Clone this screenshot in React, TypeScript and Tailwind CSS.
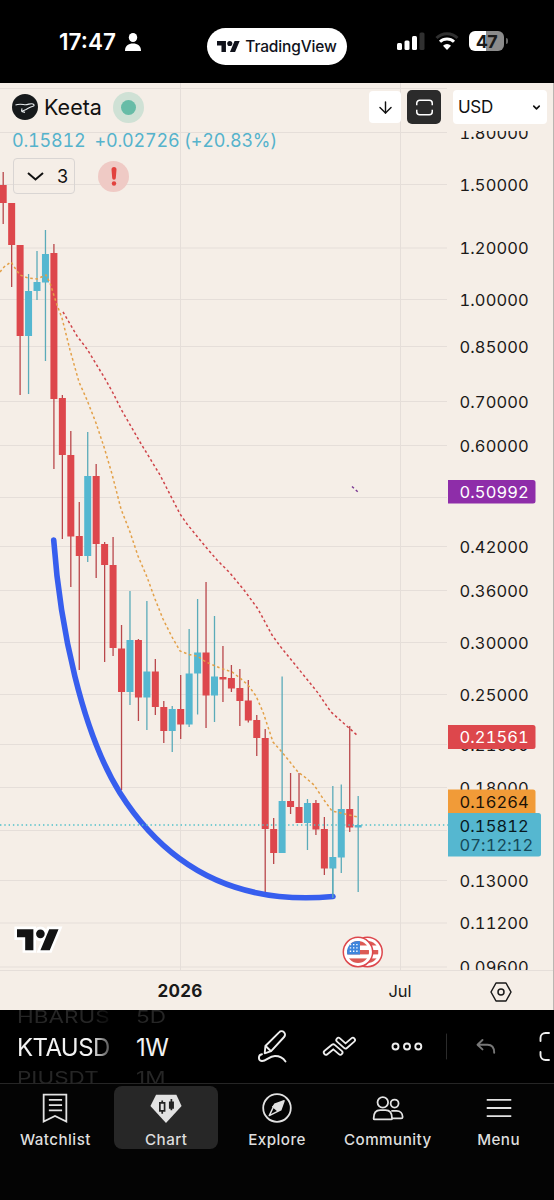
import type { ReactNode } from 'react';
import { ArrowDown, ChevronDown } from 'lucide-react';

type Candle = [top: number, bottom: number, high: number, low: number, up?: 1];

const RED = '#dd474c';
const BLUE = '#55b7d0';

// Weekly bars, y positions on the chart: body top, body bottom, wick top, wick bottom
const CANDLES: Candle[] = [
  [185, 203, 172, 224],
  [203, 245, 203, 287],
  [245, 336, 245, 395],
  [291, 336, 274, 394, 1],
  [282, 291, 251, 300, 1],
  [254, 282.5, 230, 361, 1],
  [253, 399, 244, 469],
  [398, 455, 395, 539],
  [455, 536.5, 431, 587],
  [536, 556, 502, 670],
  [476, 556, 432, 562, 1],
  [476, 544, 464, 578],
  [544, 565, 542, 662],
  [565, 648, 537, 656],
  [648.5, 692, 625, 790],
  [640, 692, 591, 705, 1],
  [640, 697.5, 639, 721],
  [671.5, 697.5, 601, 730, 1],
  [671.5, 707, 659, 715],
  [707, 731, 701, 743],
  [709, 731, 706, 752, 1],
  [709, 724.5, 675, 739],
  [673.5, 724.5, 629, 727, 1],
  [652.5, 673.5, 599, 714.5, 1],
  [652.5, 695.5, 582, 728],
  [676.5, 695.5, 616, 722, 1],
  [677, 679.5, 646, 702],
  [678, 688.5, 665, 692],
  [688, 701, 669, 726],
  [700.5, 720.5, 680, 722.5],
  [720, 738, 715, 756],
  [738, 829, 729, 892],
  [829, 853, 818, 864],
  [801, 853, 676.5, 853, 1],
  [801, 807, 773, 814],
  [807, 823, 773, 823],
  [803, 823, 799, 850, 1],
  [803, 829.5, 800, 835],
  [829, 868.5, 817, 875],
  [857, 868.5, 786, 898, 1],
  [809, 857.5, 784.5, 873, 1],
  [809, 827.5, 726, 832],
  [825, 827.5, 796, 892, 1],
];

const TICKS: [number, string][] = [
  [88.5, ''],
  [132.5, '1.80000'],
  [184.5, '1.50000'],
  [248, '1.20000'],
  [299.5, '1.00000'],
  [346.5, '0.85000'],
  [401.5, '0.70000'],
  [445.5, '0.60000'],
  [497.5, ''],
  [546.5, '0.42000'],
  [590.5, '0.36000'],
  [642.5, '0.30000'],
  [694.5, '0.25000'],
  [744.5, '0.21000'],
  [787.5, '0.18000'],
  [830.5, ''],
  [880.5, '0.13000'],
  [923, '0.11200'],
  [967, '0.09600'],
];

const FAST_MA =
  '0,272 4,267 11,262 15,268 20,275 28,278 37,279 46,275 50,283 57,305 62,318 70,350 79,382 87,400 96,423 104,447 112,474 121,509 130,532 138,556 147,577 155,599 163,619 172,637 180,651 189,654.5 197,656 206,662 220,668 232,672 240,678 248,685 256,696 263,712 273,742 281,751 290,762 298,772 306,778 314,785 324,800 332,811 341,813 349,815 358,817';
const SLOW_MA =
  '63,312 77,336 87,349 104,377 113,393 121,409 140,442 160,475 180,514 187,524 205,546 217,560 230,573 244,590 258,609 272,635 280,646 297,667 306,678 318,693 331,712 349,728 358,736';

function Flag({ cx }: { cx: number }) {
  return (
    <g transform={`translate(${cx} 952)`}>
      <circle r="14.700" fill="#fff" stroke={RED} strokeWidth="1.500" />
      <g clipPath="url(#flag)">
        <rect x="-11" y="-11" width="22" height="22" fill="#fff" />
        <rect x="-11" y="-11" width="22" height="4.500" fill="#dc5a55" />
        <rect x="-11" y="-2" width="22" height="4.400" fill="#dc5a55" />
        <rect x="-11" y="6.400" width="22" height="4.600" fill="#dc5a55" />
        <rect x="-11" y="-11" width="13" height="13.500" fill="#3f86dc" />
        <path d="M-8.200-7.400H1.500M-8.200-4.100H1.500M-8.200-.8H1.500" stroke="#fff" strokeWidth="1.400" strokeDasharray="1.400 1.800" />
      </g>
    </g>
  );
}

function PriceChart() {
  return (
    <svg viewBox="0 83 554 888" className="block h-[888px] w-[554px] font-['Inter',sans-serif] tabular-nums">
      <defs>
        <clipPath id="ticks">
          <rect x="448" y="131" width="106" height="839" />
        </clipPath>
        <clipPath id="flag">
          <circle r="11" />
        </clipPath>
      </defs>

      {/* Grid */}
      <g stroke="#e5ded9" strokeWidth="1">
        {TICKS.map(([y]) => (
          <path key={y} d={`M0 ${y}H447`} />
        ))}
        <path d="M180.5 83V970M400.5 83V970M0 970.5H554" />
      </g>

      {/* Candles */}
      {CANDLES.map(([top, bottom, high, low, up], i) => {
        const x = 3.2 + i * 8.452;
        return (
          <g key={i}>
            <path d={`M${x} ${high}V${low}`} stroke={up ? '#5aabb9' : '#b9474b'} strokeWidth="1.3" />
            <rect x={x - 3.5} y={top} width="7" height={bottom - top} fill={up ? BLUE : RED} />
          </g>
        );
      })}

      <path d="M53.700 540C60 628 82 732 120 793C163 861 230 906 333 896.500" fill="none" stroke="#375eee" strokeWidth="5.600" strokeLinecap="round" />
      <path d="M332.800 868V898" stroke="#5aabb9" strokeWidth="1.300" />

      {/* Moving averages */}
      <g fill="none" strokeWidth="1.500" strokeDasharray="2.600 2.600">
        <polyline points={FAST_MA} stroke="#e3a048" />
        <polyline points={SLOW_MA} stroke="#cf4349" />
        <path d="M352 486.500L359 493" stroke="#7b3a93" />
      </g>
      <path d="M0 825H448" stroke="#4fc0ca" strokeWidth="1.400" strokeDasharray="1.400 2.900" />

      <Flag cx={367.5} />
      <Flag cx={358} />

      {/* Watermark */}
      <g transform="translate(17 924.500) scale(1.170)" stroke="#fff" strokeWidth="4.500" fill="#fff">
        <path d="M14 22H7V11H0V4h14v18zM28 22h-8l7.500-18h8L28 22z" />
        <circle cx="20" cy="8" r="4" />
      </g>
      <g transform="translate(17 924.500) scale(1.170)" fill="#131313">
        <path d="M14 22H7V11H0V4h14v18zM28 22h-8l7.500-18h8L28 22z" />
        <circle cx="20" cy="8" r="3.700" />
      </g>

      {/* Price scale */}
      <g clipPath="url(#ticks)" fill="#1c1a19" fontSize="16.500" letterSpacing="0.1">
        {TICKS.map(([y, label]) => (
          <text key={y} x="459.500" y={y + 6}>
            {label}
          </text>
        ))}
      </g>
      <g fontSize="16.500" letterSpacing="0.1">
        <path d="M448 480h85a2.500 2.500 0 0 1 2.500 2.500v18.500a2.500 2.500 0 0 1-2.500 2.500h-85z" fill="#8e2da9" />
        <text x="459.500" y="498" fill="#fff">0.50992</text>
        <path d="M448 725h85a2.500 2.500 0 0 1 2.500 2.500v19a2.500 2.500 0 0 1-2.500 2.500h-85z" fill={RED} />
        <text x="459.500" y="743" fill="#fff">0.21561</text>
        <path d="M448 789.500h85a2.500 2.500 0 0 1 2.500 2.500v21h-87.500z" fill="#f19b38" />
        <text x="459.500" y="807.500" fill="#1c1207">0.16264</text>
        <path d="M448 813h90.500a2.500 2.500 0 0 1 2.500 2.500v38.500a2.500 2.500 0 0 1-2.500 2.500h-90.500z" fill={BLUE} />
        <text x="459.500" y="831.500" fill="#08191f">0.15812</text>
        <text x="459.500" y="851" fill="#16495a">07:12:12</text>
      </g>
      <path d="M553.500 83V971" stroke="#b9b5b1" />
    </svg>
  );
}

function StatusBar() {
  return (
    <header className="flex h-[83px] items-start bg-black text-white">
      <div className="mt-[27px] ml-[59px] flex w-[148px] items-center gap-[6px]">
        <span className="w-[60px] text-[22.5px] leading-[30px] font-semibold">17:47</span>
        <svg viewBox="0 0 16 18" className="h-[18px] w-4" fill="#fff">
          <ellipse cx="8" cy="4.500" rx="4.200" ry="4.500" />
          <path d="M0 18c0-5.500 3.500-7.500 8-7.500s8 2 8 7.500z" />
        </svg>
      </div>
      <div className="mt-7 flex h-[37px] w-[140px] items-center justify-center gap-[5px] rounded-full bg-white text-[#10121b]">
        <svg viewBox="0 4 36 18" className="h-[11.5px] w-[23px]" fill="currentColor">
          <path d="M14 22H7V11H0V4h14v18zM28 22h-8l7.500-18h8L28 22z" />
          <circle cx="20" cy="8" r="4" />
        </svg>
        <span className="text-[15.5px] font-medium tracking-[-0.15px]">TradingView</span>
      </div>
      <div className="mt-[31px] ml-[50px] flex h-5 items-center">
        <svg viewBox="0 0 28 20" className="h-5 w-7" fill="#fff">
          <rect x="0" y="12" width="5" height="7" rx="1.500" />
          <rect x="7.500" y="9.500" width="5" height="9.500" rx="1.500" />
          <rect x="15" y="5" width="5" height="14" rx="1.500" />
          <rect x="22.500" y="1.500" width="5" height="17.500" rx="1.500" fill="#303030" />
        </svg>
        <svg viewBox="0 0 24 18" className="ml-[10px] h-[18px] w-6" fill="none" strokeWidth="3">
          <path d="M1.500 6a15 15 0 0 1 21 0" stroke="#303030" />
          <path d="M5 9.800a10 10 0 0 1 14 0" stroke="#fff" />
          <path d="M12 18l-4-4.300a5.800 5.800 0 0 1 8 0z" fill="#fff" />
        </svg>
        <div className="ml-[10px] flex h-5 w-[35px] items-center justify-center rounded-[6px] bg-linear-to-r from-white from-48% to-[#8b8b8b] to-48% text-[18px] font-bold tracking-tight text-[#1a1a1a]">
          47
        </div>
        <div className="ml-[1.5px] h-[6px] w-[2px] rounded-r-full bg-[#666]" />
      </div>
    </header>
  );
}

function ChartHeader() {
  return (
    <div className="absolute inset-x-0 top-0 px-3 pt-[6px] text-[#111]">
      <div className="flex h-9 items-center">
        <svg viewBox="0 0 26 26" className="size-[26px]">
          <circle cx="13" cy="13" r="13" fill="#16191b" />
          <path d="M3.500 11c4-1.500 7-.5 10-.3 3 0 5-1.700 7.500-.8 1.500.8 1.500 2 0 2.300-3 .6-4.500 2-7 3.200l-4.500 2m0 0 .5-3m-.5 3 3.500 1" fill="none" stroke="#e8ecee" strokeWidth="1.100" />
        </svg>
        <span className="ml-[6px] w-[58px] text-[21.5px]">Keeta</span>
        <span className="ml-[11px] flex size-[31px] items-center justify-center rounded-full bg-[#cfe1d5]">
          <span className="size-[15px] rounded-full bg-[#67bca7]" />
        </span>
        <div className="ml-auto flex items-center">
          <span className="flex size-8 items-center justify-center rounded-[4px] bg-white">
            <ArrowDown size={19} strokeWidth={1.8} />
          </span>
          <span className="ml-[6px] flex size-[34px] items-center justify-center rounded-[5px] bg-[#2b2b2b]">
            <svg viewBox="0 0 16 16" className="size-[17px]" fill="none" stroke="#fff" strokeWidth="1.400">
              <path d="M.7 5.800V4a2.800 2.800 0 0 1 2.800-2.800h9A2.800 2.800 0 0 1 15.300 4v1.800M.7 10.200V12a2.800 2.800 0 0 0 2.800 2.800h9a2.800 2.800 0 0 0 2.800-2.800v-1.800" />
            </svg>
          </span>
          <span className="ml-3 -mr-[5px] flex h-[34px] w-[94px] items-center justify-between rounded-[4px] bg-white pt-px pr-[5px] pl-[5px] text-[17px] tracking-[-0.3px]">
            USD
            <ChevronDown size={11} strokeWidth={3.5} />
          </span>
        </div>
      </div>
      <div className="flex h-[30px] items-center gap-[9px] text-[18px] tracking-[-0.2px] whitespace-nowrap text-[#55b3cc] tabular-nums">
        <span>0.15812</span>
        <span>+0.02726 (+20.83%)</span>
      </div>
      <div className="mt-[3px] ml-px flex items-center">
        <span className="flex h-[36px] w-[62px] items-center rounded-[4px] border border-[#d9d5d3] pl-[13px] text-[18px]">
          <svg viewBox="0 0 17 9" className="h-[9px] w-[17px]" fill="none" stroke="currentColor" strokeWidth="2">
            <path d="M1 1l7.500 6.500L16 1" />
          </svg>
          <span className="ml-[13px]">3</span>
        </span>
        <span className="ml-[23px] flex size-[31px] items-center justify-center rounded-full bg-[#efcac5]">
          <svg viewBox="0 0 6 19" className="h-[19px] w-[6px]" fill="#e2423e">
            <path d="M.5 2.500a2.500 2.500 0 0 1 5 0l-.7 8.500a1.800 1.800 0 0 1-3.600 0z" />
            <circle cx="3" cy="16.500" r="2.200" />
          </svg>
        </span>
      </div>
    </div>
  );
}

function TimeAxis() {
  return (
    <div className="flex h-[39px] items-center border-r border-[#b9b5b1] pt-[2px] text-[17px] text-[#191919]">
      <span className="ml-[140px] w-20 text-center font-bold tracking-[0.3px]">2026</span>
      <span className="ml-[140px] w-20 text-center text-[16.5px]">Jul</span>
      <svg viewBox="0 0 22 20" className="ml-[50px] h-5 w-[22px]" fill="none" stroke="currentColor" strokeWidth="1.500">
        <path d="M6 1h10l5 9-5 9H6l-5-9z" strokeLinejoin="round" />
        <circle cx="11" cy="10" r="3" />
      </svg>
    </div>
  );
}

function Wheel({ items, className }: { items: [string, string, string]; className: string }) {
  return (
    <div className={`flex flex-col overflow-hidden whitespace-nowrap ${className}`}>
      <span className="flex h-[22px] scale-y-[0.75] items-center pb-[10px] text-[22.5px] text-[#262626]">{items[0]}</span>
      <span className="flex h-[30px] items-center pt-px text-[24px] tracking-[-0.6px] text-[#f2f2f2]">{items[1]}</span>
      <span className="flex h-[21px] scale-y-[0.75] items-center pt-[14px] text-[22.5px] text-[#262626]">{items[2]}</span>
    </div>
  );
}

function Toolbar() {
  return (
    <div className="flex h-[74px] overflow-hidden border-b border-[#262626] bg-black">
      <Wheel items={['HBARUS', 'KTAUSD', 'PIUSDT']} className="ml-[17px] w-[93px] mask-r-from-80% mask-r-to-110%" />
      <Wheel items={['5D', '1W', '1M']} className="ml-[26px] w-[60px]" />
      <svg viewBox="250 1010 304 73" className="ml-[54px] h-[73px] w-[304px] shrink-0" fill="none" stroke="#eee" strokeWidth="1.900" strokeLinecap="round" strokeLinejoin="round">
        <path d="M264.700 1053.300l.7-7.300 13.700-13.700a3.400 3.400 0 0 1 5 4.700l-13 14.200zM265.600 1046l5.400 5.200" />
        <path d="M262 1054.200c-4 .6-4.200 6.200-.2 6.800 4.200.5 7.200-5 13.200-5 5.500 0 8.500 2.500 10.500 5.500" />
        <path d="M326 1052.500l7.300-6 7 6" strokeWidth="6.200" />
        <path d="M338.500 1040l7 6.300 7.300-6.300" strokeWidth="6.200" />
        <path d="M326 1052.500l7.300-6 7 6" strokeWidth="2.600" stroke="#000" />
        <path d="M338.500 1040l7 6.300 7.300-6.300" strokeWidth="2.600" stroke="#000" />
        <circle cx="395.500" cy="1046.500" r="3" />
        <circle cx="407" cy="1046.500" r="3" />
        <circle cx="418.300" cy="1046.500" r="3" />
        <path d="M446.500 1034v25" stroke="#2b2b2b" strokeWidth="1" />
        <path d="M482.500 1040l-5 4.700 5 4.700M478 1044.700h9.500c4.500 0 6.700 3.300 6.700 8" stroke="#777" />
        <path d="M549 1033h-3.500a5 5 0 0 0-5 5v3M549 1060h-3.500a5 5 0 0 1-5-5v-3" />
      </svg>
    </div>
  );
}

function NavItem({ label, active, children }: { label: string; active?: boolean; children: ReactNode }) {
  return (
    <div className="flex flex-1 justify-center pt-[2px]">
      <div className={`flex h-[63px] w-[104px] flex-col items-center rounded-lg pt-[5px] ${active ? 'bg-[#272727]' : ''}`}>
        <svg viewBox="0 0 36 36" className="size-9" fill="none" stroke="#e2e2e2" strokeWidth="1.900">
          {children}
        </svg>
        <span className="mt-[6px] text-[15.2px] leading-[18px] font-medium tracking-[0.45px] text-[#dedede]">{label}</span>
      </div>
    </div>
  );
}

function BottomNav() {
  return (
    <nav className="flex flex-1 bg-[#040404]">
      <NavItem label="Watchlist">
        <path d="M6 3.800h24v28.500l-12-5.800-12 5.800zM11.500 9.500h14M11.500 15h14M11.500 20.500h14" />
      </NavItem>
      <NavItem label="Chart" active>
        <path d="M7.500 4h21.500l5.500 12-16.500 18-16.500-18z" fill="#e2e2e2" stroke="none" />
        <g stroke="#222" strokeWidth="1.800">
          <path d="M11.500 12.500h5v8.500h-5zM14 10v2.500M14 21v3" />
          <path d="M22 12h3.500v6H22zM23.700 8.500v12" fill="#222" />
        </g>
      </NavItem>
      <NavItem label="Explore">
        <circle cx="18" cy="18" r="14.600" />
        <path d="M25.500 10.300L22 20 9.800 26l5.700-12z" strokeLinejoin="round" strokeWidth="1.600" />
        <path d="M25.500 10.300L22 20l-3.500 1.800-6-5 3-2.800z" fill="#e2e2e2" stroke="none" />
      </NavItem>
      <NavItem label="Community">
        <circle cx="12.500" cy="12" r="5.600" />
        <circle cx="25" cy="13.300" r="4.200" />
        <path d="M2.800 29c0-5.800 3-8.700 7-8.700h5.500c4 0 7 2.900 7 8.700 0 .6-.5 1-1 1H3.800c-.6 0-1-.4-1-1z" />
        <path d="M21.500 21h5.500c4 0 6.500 2.700 6.500 6.500 0 1-.5 1.500-1.500 1.500H22" />
      </NavItem>
      <NavItem label="Menu">
        <path d="M5 9.500h26M5 18h26M5 26.500h26" />
      </NavItem>
    </nav>
  );
}

export default function App() {
  return (
    <div className="flex h-[1200px] w-[554px] flex-col overflow-hidden bg-black font-['Inter',sans-serif]">
      <StatusBar />
      <main className="relative bg-[#f5eee7]">
        <PriceChart />
        <ChartHeader />
        <TimeAxis />
      </main>
      <Toolbar />
      <BottomNav />
    </div>
  );
}
